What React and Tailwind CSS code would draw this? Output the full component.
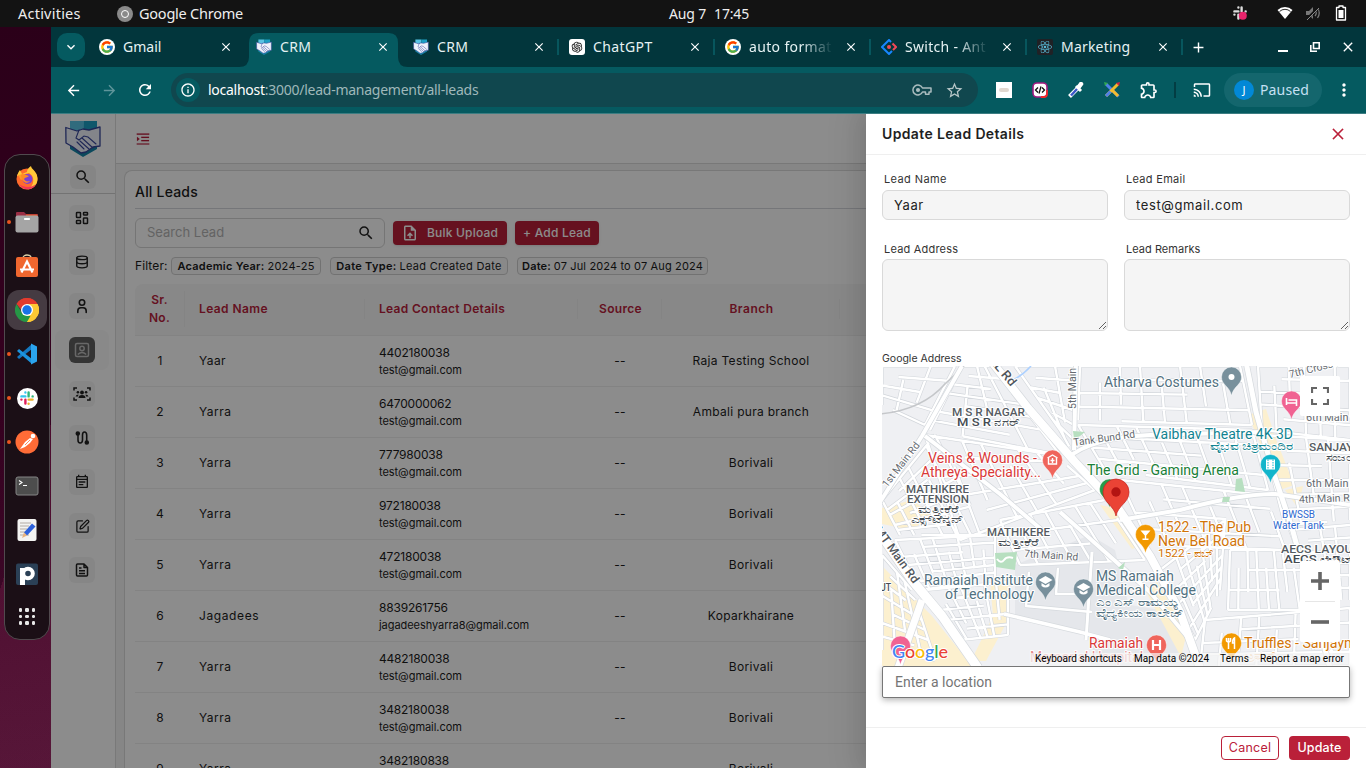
import React from "react";
import { FcGoogle } from "react-icons/fc";
import { FaReact } from "react-icons/fa";
import { AiOutlineOpenAI, AiOutlineMenuUnfold, AiOutlineClose } from "react-icons/ai";
import {
  MdOutlineEventNote, MdOutlineUploadFile, MdArrowBack, MdArrowForward, MdRefresh,
  MdInfoOutline, MdStarOutline, MdOutlineExtension, MdCast, MdMoreVert,
  MdClose, MdAdd, MdExpandMore, MdSearch,
} from "react-icons/md";
import { Database, SquarePen } from "lucide-react";

function Handshake({ className }) {
  return (
    <svg className={className} viewBox="0 0 36 37">
      <path d="M5 1h14v32L5 25z" fill="#59c3e3" />
      <path d="M19 1h13v24L18 33z" fill="#1c9fc4" />
      <path d="M5 24l13 6 14-6v5l-14 8-13-8z" fill="#1686a8" />
      <path d="M.8 7.5L12 11l6-2 6 1 11-3v19l-7 1-7 5-5 1-8-6-7-4z" fill="#eef2fb" stroke="#38479b" strokeWidth="1.3" strokeLinejoin="round" />
      <path d="M14 10l-3 8 3 2 5-4 4 1 8 7M17 18l11 10M15 21l9 8M12 22l7 7" fill="none" stroke="#38479b" strokeWidth="1.1" strokeLinecap="round" />
    </svg>
  );
}

function SlackMark({ className }) {
  return (
    <svg className={className} viewBox="0 0 20 20" fill="none" strokeWidth="3" strokeLinecap="round">
      <path d="M8 3v.1M3 8h5" stroke="#36c5f0" />
      <path d="M12 3v5M17 8h.1" stroke="#2eb67d" />
      <path d="M17 12h-5M12 17v.1" stroke="#ecb22e" />
      <path d="M8 17v-5M3 12h.1" stroke="#e01e5a" />
    </svg>
  );
}

const dockIcons = {
  firefox: (
    <svg viewBox="0 0 24 24" className="size-6">
      <circle cx="12" cy="13" r="10.5" fill="#ff6b2c" />
      <path d="M2 10C3 7 4 5 5 4l2 4 5-2c0-2 1-4 4-6 0 3 6 5 6.500 12 .5 6-4 11-10 11.500C20 20 20 10 14 7z" fill="#ffc83a" />
      <path d="M3 9l5-1 4 2-3 2-3 2z" fill="#ff9a28" />
      <path d="M4 18c4 7 14 7 17 0-4 4-12 4-17 0z" fill="#f1375a" />
      <circle cx="12.500" cy="13" r="5" fill="#7b40d6" />
      <path d="M6 9c3-1 5 0 8 1-2 2-4 1-5 3 1 2 3 3 6 2-3 4-9 1-9-6z" fill="#ff8a24" />
    </svg>
  ),
  files: (
    <svg viewBox="0 0 24 24" className="size-6">
      <path d="M1 3q0-1 1-1h7l2 2h11q1 0 1 1v5H1z" fill="#9b2e45" /><path d="M11 4.500h11.500V7H11z" fill="#e95420" />
      <rect x=".5" y="5.500" width="23" height="17" rx="2" fill="#a5a5a5" />
      <rect x="9" y="8" width="6" height="2" rx=".8" fill="#fff" />
    </svg>
  ),
  store: (
    <svg viewBox="0 0 24 24" className="size-6">
      <path d="M8 4c0-4 8-4 8 0" fill="none" stroke="#d9cfa8" strokeWidth="1.300" />
      <rect x="1" y="3" width="22" height="20" rx="2" fill="#f0672f" />
      <path d="M6.500 18.500L12 7.500l5.500 11M5 15.500h14" fill="none" stroke="#fff" strokeWidth="2.200" />
    </svg>
  ),
  chrome: (
    <svg viewBox="0 0 24 24" className="size-6">
      <path d="M12 12L1.600 6A12 12 0 0 1 22.400 6z" fill="#e33b2e" />
      <path d="M12 12L22.400 6A12 12 0 0 1 12 24z" fill="#fcc934" />
      <path d="M12 6h10.400L17.200 15 12 24l0-6 5-6z" fill="#fcc934" />
      <path d="M1.600 6A12 12 0 0 1 22.400 6H12c-3 0-5 2-6 5.500z" fill="#e33b2e" />
      <path d="M1.600 6L6.800 15l5.200 3h5l-5 6A12 12 0 0 1 1.600 6z" fill="#269746" />
      <path d="M17.200 15L12 24A12 12 0 0 0 22.400 6H12z" fill="#fcc934" />
      <circle cx="12" cy="12" r="6" fill="#fff" /><circle cx="12" cy="12" r="4.700" fill="#1a73e8" />
    </svg>
  ),
  code: (
    <svg viewBox="0 0 24 24" className="size-6">
      <path d="M17 2L2 15l2 2L17 7z" fill="#1478c0" /><path d="M17 22L2 9l2-2 13 10z" fill="#1c93dd" />
      <path d="M16 1.500l6 3v15l-6 3z" fill="#2ba4ee" />
    </svg>
  ),
  slack: (
    <span className="flex size-[21px] items-center justify-center rounded-full bg-white"><SlackMark className="size-4" /></span>
  ),
  postman: (
    <svg viewBox="0 0 24 24" className="size-6">
      <circle cx="12" cy="12" r="11.500" fill="#ff6c37" />
      <path d="M5 19l5-7 5-4 3 1-3 4-5 4z" fill="#fff" /><circle cx="18" cy="6" r="2.300" fill="#fff" />
      <path d="M10 15l5-5" stroke="#ff6c37" strokeWidth=".8" />
    </svg>
  ),
  terminal: (
    <svg viewBox="0 0 24 24" className="size-6">
      <rect x="1" y="3" width="22" height="18" rx="2" fill="#4d4d4d" stroke="#858585" />
      <path d="M4 6.500l3 2-3 2M8 11.500h4" fill="none" stroke="#fff" strokeWidth="1.100" />
    </svg>
  ),
  editor: (
    <svg viewBox="0 0 24 24" className="size-6">
      <rect x="2.500" y="1" width="19" height="22" rx="2" fill="#f3f3f1" />
      <path d="M5 5h11M5 8h9M5 11h7M5 14h6M5 17h9" stroke="#b2aba4" />
      <path d="M9 14.500l8-9 3.500 3-8.500 9z" fill="#2d62db" /><path d="M9 14.500l3 3-5 2.500z" fill="#e9b27c" />
    </svg>
  ),
  pp: (
    <svg viewBox="0 0 24 24" className="size-6">
      <rect x="1" y="1.500" width="22" height="21.500" rx="2" fill="#2b4056" />
      <circle cx="13" cy="11.500" r="4.800" fill="none" stroke="#fff" strokeWidth="4" />
      <path d="M5 6h5v17H5z" fill="#fff" />
    </svg>
  ),
};

const dock = [
  ["firefox", false], ["files", true], ["store", false], ["chrome", true], ["code", true],
  ["slack", true], ["postman", true], ["terminal", false], ["editor", false], ["pp", false],
];

function Dock() {
  return (
    <aside className="flex w-[51px] shrink-0 flex-col bg-[linear-gradient(170deg,#2b0019_0%,#34001f_50%,#420e2d_100%)]">
      <div className="flex h-full flex-col bg-[linear-gradient(107deg,transparent_0_62%,rgba(255,90,150,.11)_62%_100%)] pt-[127px] pl-1">
        <div className="flex h-[486px] w-[46px] flex-col items-center rounded-[16px] border border-[#514a4e] bg-[#1b0f16] pt-px">
          {dock.map(([id, on]) => (
            <div key={id} className="flex h-11 w-full items-center">
              <span className={on ? "ml-0.5 size-1 rounded-full bg-[#e95420]" : "ml-0.5 size-1"} />
              <span className={id === "chrome" ? "-ml-1 flex size-10 items-center justify-center rounded-xl bg-[#453b42]" : "-ml-1 flex size-10 items-center justify-center"}>{dockIcons[id]}</span>
            </div>
          ))}
          <div className="mt-3 grid grid-cols-3 gap-[3px]">
            {Array.from({ length: 9 }, (_, i) => <span key={i} className="size-[3.500px] rounded-[1.200px] bg-[#e8e8e8]" />)}
          </div>
        </div>
      </div>
    </aside>
  );
}

function TopBar() {
  return (
    <header className="grid h-[27px] shrink-0 grid-cols-[591px_200px_1fr] items-center bg-[#131313] pl-[18px] text-[14.500px] text-[#eee]">
      <div className="flex items-center">
        <span className="w-[99px] tracking-[0.230px]">Activities</span>
        <span className="flex size-4 items-center justify-center rounded-full bg-[#8a8a8a]"><span className="size-[8px] rounded-full border-[1.500px] border-white" /></span>
        <span className="pl-[6px] tracking-[-0.240px] whitespace-nowrap">Google Chrome</span>
      </div>
      <div className="flex justify-center gap-2 pb-px text-[14px] tracking-[-0.150px]"><span>Aug 7</span><span>17:45</span></div>
      <div className="flex items-center justify-end pr-[19px] pb-px">
        <svg viewBox="0 0 20 20" className="mr-[29px] size-4" strokeWidth="3" strokeLinecap="round"><path d="M8 3v.1M3 8h5M12 3v5M17 8h.1M3 12h.1M8 12v5" fill="none" stroke="#ddd" /><circle cx="13.500" cy="13.500" r="5" fill="#e8246c" /></svg>
        <svg viewBox="0 0 16 14" className="mr-[12px] h-3.5 w-4"><path d="M.5 4a11 11 0 0 1 15 0L8 13z" fill="#fff" /><path d="M2.500 5.500a8 8 0 0 1 11 0" stroke="#131313" strokeWidth=".9" fill="none" /></svg>
        <svg viewBox="0 0 16 16" className="mr-[14px] size-4"><path d="M1 6h3l4-4v12L4 10H1z" fill="#777" /><path d="M10 5q2.500 3 0 6M12.500 3q3.500 5 0 10" fill="none" stroke="#777" strokeWidth="1.300" /><path d="M2 14L14 2" stroke="#131313" strokeWidth="2.500" /><path d="M2 15L14 3" stroke="#888" /></svg>
        <svg viewBox="0 0 12 16" className="h-4 w-3"><path d="M4 1h4v1.500h2.500v12.500h-9V2.500H4z" fill="none" stroke="#fff" strokeWidth="1.300" strokeLinejoin="round" /><path d="M3.500 5h5v8h-5z" fill="#fff" /></svg>
      </div>
    </header>
  );
}

function AntMark() {
  return (
    <svg viewBox="0 0 16 16" className="size-4">
      <path d="M10 3L8 1 1 8l7 7 3-3" fill="none" stroke="#1786ff" strokeWidth="2" /><path d="M11.500 4.500L15 8l-3 3" fill="none" stroke="#f04858" strokeWidth="2" />
      <circle cx="8" cy="8" r="2" fill="#f04858" />
    </svg>
  );
}

const google = <span className="flex size-4 items-center justify-center rounded-full bg-white"><FcGoogle className="size-3.5" /></span>;
const tabs = [
  { t: "Gmail", icon: google, w: "w-[157px]" },
  { t: "CRM", icon: <Handshake className="size-4" />, w: "w-[157px]", active: true, tr: "tracking-[0.300px]" },
  { t: "CRM", icon: <Handshake className="size-4" />, w: "w-[156px]", tr: "tracking-[0.300px]" },
  { t: "ChatGPT", icon: <span className="flex size-4 items-center justify-center rounded-[3px] bg-white"><AiOutlineOpenAI className="size-3.5 text-[#222]" /></span>, w: "w-[156px]", tr: "tracking-[0.400px]" },
  { t: "auto format", icon: google, w: "w-[156px]", fade: true, tr: "tracking-[0.350px]" },
  { t: "Switch - Ant", icon: <AntMark />, w: "w-[156px]", fade: true, tr: "tracking-[0.300px]" },
  { t: "Marketing", icon: <span className="flex size-4 items-center justify-center rounded-[2px] bg-[#202125]"><FaReact className="size-3.5 text-[#58b9d6]" /></span>, w: "w-[156px]", tr: "tracking-[0.200px]" },
];

function Tabs() {
  return (
    <div className="flex h-10 shrink-0 items-stretch bg-[#02363c] text-[14px] text-[#e6f2f3]">
      <div className="flex w-[40px] items-center pl-1.5"><span className="flex size-7 items-center justify-center rounded-[10px] bg-[#055a60]"><MdExpandMore className="size-4 text-white" /></span></div>
      {tabs.map((b, i) => (
        <div key={i} className={`relative flex ${b.w} shrink-0 items-end`}>
          {b.active && (
            <svg viewBox="0 0 170 34" className="absolute bottom-0 -left-[9px] h-[34px] w-[170px]"><path d="M0 34q10 0 10-10V10Q10 0 20 0h130q9 0 9 10v14q0 10 10 10z" fill="#055a60" /></svg>
          )}
          <div className="relative flex h-10 w-full items-center pl-2">
            {b.icon}
            <span className={`ml-2 w-[84px] overflow-hidden pb-0.5 whitespace-nowrap ${b.tr || ""} ${b.fade ? "[mask-image:linear-gradient(90deg,#000_62%,transparent)]" : ""}`}>{b.t}</span>
            <MdClose className={i > 1 ? "ml-[11px] size-3.5 shrink-0 text-white" : "ml-[12px] size-3.5 shrink-0 text-white"} />
            {i > 1 && <span className="ml-auto mr-0.5 h-4 w-0.5 bg-[#07565d]" />}
          </div>
        </div>
      ))}
      <div className="flex flex-1 items-center text-white">
        <MdAdd className="ml-[5px] size-[17px]" />
        <span className="mt-[8px] ml-[71px] h-0.5 w-2.5 bg-white" />
        <svg viewBox="0 0 10 10" className="ml-[22px] size-2.5"><path d="M3.500.8h5.700v5.700H3.500zM.8 3v6.200H7" fill="none" stroke="#fff" strokeWidth="1.600" /></svg>
        <MdClose className="ml-[20px] size-4" />
      </div>
    </div>
  );
}

function Toolbar() {
  return (
    <div className="flex h-[46px] shrink-0 items-center bg-[#055a60] text-white">
      <MdArrowBack className="ml-[14px] size-[17px]" />
      <MdArrowForward className="ml-[19px] size-[17px] text-[#5f959a]" />
      <MdRefresh className="ml-[18px] size-[18px]" />
      <div className="ml-[17px] flex h-[34px] w-[807px] items-center rounded-full bg-[#10474e] px-[5px]">
        <span className="flex size-6 items-center justify-center rounded-full bg-[#055a60]"><MdInfoOutline className="size-4" /></span>
        <span className="ml-2 pb-0.5 text-[14px] tracking-[-0.260px] text-[#9fb8ba]"><span className="text-white">localhost</span>:3000/lead-management/all-leads</span>
        <svg viewBox="0 0 20 12" className="ml-auto h-3 w-5" fill="none" stroke="#a9bcbe" strokeWidth="1.500"><path d="M10.500 4H19v4h-2v2.200h-3.500V8h-3A5 5 0 1 1 10.500 4z" strokeLinejoin="round" /><circle cx="6" cy="6" r="1.300" fill="#a9bcbe" /></svg>
        <MdStarOutline className="mr-[9px] ml-[13px] size-[19px] text-[#b6c6c7]" />
      </div>
      <span className="ml-[18px] flex size-4 items-center justify-center bg-white"><span className="h-1 w-2.5 rounded bg-[#e2d8d0]" /></span>
      <svg viewBox="0 0 16 16" className="ml-5 size-4"><rect x="1" y="1" width="14" height="14" rx="4" fill="#fff" stroke="#a01a80" strokeWidth="1.600" /><path d="M9 15h3q3 0 3-3V8" stroke="#f02a2a" strokeWidth="1.800" fill="none" /><path d="M6 5.500L3.500 8 6 10.500M10 5.500L12.500 8 10 10.500M9 4.500l-2 7" stroke="#111" fill="none" strokeWidth="1.300" /></svg>
      <svg viewBox="0 0 16 16" className="ml-5 size-4"><path d="M8 4l5 5" stroke="#fff" strokeWidth="3" /><path d="M10 6l3-4" stroke="#fff" strokeWidth="4.500" strokeLinecap="round" /><path d="M9.500 6.500L3 13l-1.500 1.500" stroke="#fff" strokeWidth="4" /><path d="M9 7l-6 6.500" stroke="#3956c8" strokeWidth="2.500" /></svg>
      <svg viewBox="0 0 16 16" className="ml-5 size-4"><path d="M2 2l12.500 12.500" stroke="#4f80e8" strokeWidth="3" /><path d="M8 8l6 6" stroke="#f3bb2e" strokeWidth="3" /><path d="M14 2L2 14" stroke="#f3bb2e" strokeWidth="3" /><path d="M6.500 9.500L2 14" stroke="#4f80e8" strokeWidth="3" /><path d="M0 0l4 1-3 3z" fill="#32a852" /><path d="M16 0l-4 1 3 3z" fill="#d6233f" /></svg>
      <MdOutlineExtension className="ml-[19px] size-[20px]" />
      <span className="ml-[15px] h-4 w-0.5 bg-[#033d43]" />
      <MdCast className="ml-[17px] size-[18px]" />
      <div className="ml-[13px] flex h-[34px] w-[98px] items-center rounded-full bg-[#14666d] pl-2.5">
        <span className="flex size-5 items-center justify-center rounded-full bg-[#0288d6] text-[11px]">J</span>
        <span className="ml-1.5 pb-0.5 text-[14px] tracking-[0.150px] text-[#c6e0f4]">Paused</span>
      </div>
      <MdMoreVert className="ml-3 size-5" />
    </div>
  );
}

const sideIcons = [
  <svg key="d" viewBox="0 0 16 16" className="size-4" fill="none" stroke="currentColor" strokeWidth="1.500"><rect x="2.500" y="2.500" width="4" height="5" rx=".6" /><rect x="9.500" y="2.500" width="4" height="2.500" rx=".6" /><rect x="2.500" y="10.500" width="4" height="3" rx=".6" /><rect x="9.500" y="8" width="4" height="5.500" rx=".6" /></svg>,
  <Database key="b" className="size-[14px]" strokeWidth={2.4} />,
  <svg key="p" viewBox="0 0 16 16" className="size-4" fill="none" stroke="currentColor" strokeWidth="1.600" strokeLinecap="round"><circle cx="8" cy="4.500" r="2.700" /><path d="M3.800 14.500V13q0-3.300 3-3.300h2.400q3 0 3 3.300v1.500" /></svg>,
  <svg key="c" viewBox="0 0 16 16" className="size-4" fill="none" stroke="#bdbdbd" strokeWidth="1.500"><rect x="1.500" y="1.500" width="13" height="13" rx="1.500" /><circle cx="8" cy="6.500" r="2.200" /><path d="M3.800 12.500q4.200-4 8.400 0" /></svg>,
  <svg key="s" viewBox="0 0 18 16" className="h-4 w-[18px]" fill="currentColor"><path d="M1 4.500V2h3M14 2h3v2.500M1 11.500V14h3M14 14h3v-2.500" fill="none" stroke="currentColor" strokeWidth="1.500" /><circle cx="9" cy="6.500" r="1.900" /><circle cx="4.900" cy="6.300" r="1.300" /><circle cx="13.100" cy="6.300" r="1.300" /><path d="M5.500 12q0-3 3.500-3t3.500 3zM2.500 10.500q.5-2 3-2L5 10.500zM15.500 10.500q-.5-2-3-2l.5 2z" /></svg>,
  <svg key="r" viewBox="0 0 16 16" className="size-4" fill="none" stroke="currentColor" strokeWidth="1.600"><path d="M4 3v7q0 3 2.200 3t2.300-3V5q0-3 2-3t2.200 3v7" /><circle cx="3.800" cy="3.500" r="1.500" fill="currentColor" /><circle cx="12.800" cy="12.500" r="1.500" fill="currentColor" /></svg>,
  <MdOutlineEventNote key="e" className="size-4" />,
  <SquarePen key="q" className="size-[15px]" strokeWidth={2} />,
  <svg key="f" viewBox="0 0 16 16" className="size-4" fill="none" stroke="currentColor" strokeWidth="1.500" strokeLinejoin="round"><path d="M3.500 2H10l3.500 3.500V13q0 1-1 1h-9q-1 0-1-1V3q0-1 1-1zM10 2v3.500h3.500M5 6h2.500M5 8.800h6M5 11.400h6" /></svg>,
];

function Sidebar() {
  return (
    <nav className="flex w-[65px] shrink-0 flex-col items-center border-r border-[#dcdcdc] text-[#222]">
      <Handshake className="mt-[6px] h-[37px] w-9" />
      <span className="mt-2 flex h-6 w-[26px] items-center justify-center rounded-md bg-[#f3f3f3]"><MdSearch className="size-[18px]" /></span>
      <span className="mt-1 h-px w-full bg-[#d2d2d2]" />
      <div className="mt-0.5 mr-0.5 flex flex-col">
        {sideIcons.map((ic, i) => (
          <span key={i} className="flex h-11 w-[54px] items-center justify-center">
            <span className={i === 3 ? "flex h-10 w-[54px] items-center justify-center rounded-lg bg-[#f9f9f9]" : "flex"}>
              <span className={i === 3 ? "flex size-[26px] items-center justify-center rounded-md bg-[#606060]" : "flex size-[26px] items-center justify-center rounded-md bg-[#f5f5f5]"}>{ic}</span>
            </span>
          </span>
        ))}
      </div>
    </nav>
  );
}

const leads = [
  ["Yaar", "4402180038", "test@gmail.com", "Raja Testing School"],
  ["Yarra", "6470000062", "test@gmail.com", "Ambali pura branch"],
  ["Yarra", "777980038", "test@gmail.com", "Borivali"],
  ["Yarra", "972180038", "test@gmail.com", "Borivali"],
  ["Yarra", "472180038", "test@gmail.com", "Borivali"],
  ["Jagadees", "8839261756", "jagadeeshyarra8@gmail.com", "Koparkhairane"],
  ["Yarra", "4482180038", "test@gmail.com", "Borivali"],
  ["Yarra", "3482180038", "test@gmail.com", "Borivali"],
  ["Yarra", "3482180838", "test@gmail.com", "Borivali"],
];

function Tag({ k, v, w }) {
  return <span className={`flex h-[18px] items-center justify-center rounded border border-[#d0d0d0] bg-[#fafafa] text-[11px] whitespace-nowrap ${w}`}><b className="mr-[3px] font-semibold">{k}</b>{v}</span>;
}

const cols = "grid grid-cols-[50px_180px_213px_84px_178px_300px]";

function Leads() {
  return (
    <div className="flex min-w-0 flex-1 flex-col bg-[#f4f4f4] text-[#1c1c1c]">
      <div className="flex h-[50px] shrink-0 items-center border-b border-[#dadada] bg-white pl-[19px]"><AiOutlineMenuUnfold className="size-4 text-[#b91f3c] [stroke:currentColor] [stroke-width:10]" /></div>
      <section className="mt-1.5 ml-2 w-[1300px] flex-1 rounded-tl-lg border-t border-l border-[#dadada] bg-white pl-2.5">
        <h1 className="flex h-[38px] items-center border-b border-[#d5d8dc] pt-1 text-[14px] font-medium tracking-[0.200px]">All Leads</h1>
        <div className="mt-[9px] flex h-[30px] items-center">
          <div className="flex h-[30px] w-[250px] items-center justify-between rounded-md border border-[#d5d5d5] px-[11px] text-[13px] text-[#b5b5b5]">Search Lead<MdSearch className="-mr-0.5 size-[18px] text-[#222]" /></div>
          <button className="ml-2 flex h-6 w-[114px] items-center rounded bg-[#ba2039] pl-[8px] text-[12px] font-medium tracking-[0.200px] text-white shadow-sm"><MdOutlineUploadFile className="mr-2 size-[18px]" />Bulk Upload</button>
          <button className="ml-2 h-6 w-[84px] rounded bg-[#ba2039] text-[12px] font-medium tracking-[0.200px] text-white shadow-sm">+ Add Lead</button>
        </div>
        <div className="mt-[9px] flex h-[18px] items-center">
          <span className="w-9 text-[12px] tracking-[0.100px]">Filter:</span>
          <Tag w="w-[150px] tracking-[0.250px]" k="Academic Year:" v="2024-25" />
          <Tag w="ml-[9px] w-[178px] tracking-[0.290px]" k="Date Type:" v="Lead Created Date" />
          <Tag w="ml-[9px] w-[191px] tracking-[0.140px]" k="Date:" v="07 Jul 2024 to 07 Aug 2024" />
        </div>
        <div className={`mt-[9px] ${cols} h-[52px] items-center rounded-tl-lg border-b border-[#eeeeee] bg-[#f7f7f7] pb-0.5 text-[12px] font-semibold tracking-[0.300px] text-[#b91f3c]`}>
          <span className="border-r border-[#f0f0f0] text-center leading-[18px]">Sr.<br />No.</span>
          <span className="flex h-5 items-center border-r border-[#f0f0f0] pl-3.5 tracking-[0.400px]">Lead Name</span>
          <span className="flex h-5 items-center border-r border-[#f0f0f0] pl-3.5">Lead Contact Details</span>
          <span className="flex h-5 items-center justify-center border-r border-[#f0f0f0] pl-0.5">Source</span>
          <span className="flex h-5 items-center justify-center border-r border-[#f0f0f0] pl-0.5 tracking-[0.500px]">Branch</span>
        </div>
        {leads.map(([name, tel, mail, branch], i) => (
          <div key={i} className={`${cols} h-[51px] items-center border-b border-[#eeeeee] text-[12px]`}>
            <span className="text-center">{i + 1}</span>
            <span className={name === "Yaar" ? "pl-3.5 tracking-[0.450px]" : name === "Yarra" ? "pl-3.5 tracking-[0.500px]" : "pl-3.5 tracking-[0.600px]"}>{name}</span>
            <span className="flex flex-col pl-3.5 leading-[18px] tracking-[-0.200px]">{tel}<small className="text-[11px] leading-[17px] tracking-[-0.050px]">{mail}</small></span>
            <span className="text-center tracking-[0.300px]">--</span>
            <span className="text-center tracking-[0.300px]">{branch}</span>
          </div>
        ))}
      </section>
    </div>
  );
}

/* Streets: each quad is subdivided into parallel lanes in both directions. */
const quads = [
  [[882, 366], [955, 366], [925, 425], [882, 405], 3, 4],
  [[962, 366], [992, 366], [1060, 455], [930, 430], 4, 7],
  [[925, 435], [1055, 455], [1095, 490], [960, 540], 7, 5],
  [[882, 500], [935, 435], [985, 535], [900, 535], 6, 7],
  [[1015, 366], [1075, 366], [1074, 455], [1060, 430], 3, 6],
  [[1080, 366], [1240, 366], [1252, 425], [1078, 420], 8, 4],
  [[1078, 425], [1252, 430], [1268, 490], [1105, 470], 9, 4],
  [[1258, 366], [1350, 366], [1350, 440], [1262, 430], 6, 5],
  [[1262, 435], [1350, 440], [1350, 520], [1285, 525], 4, 6],
  [[1120, 480], [1265, 495], [1285, 550], [1150, 545], 7, 4],
  [[895, 540], [995, 535], [995, 580], [920, 590], 8, 6],
  [[925, 590], [1008, 582], [1008, 635], [960, 640], 7, 5],
  [[882, 555], [912, 590], [935, 660], [882, 650], 4, 7],
  [[1000, 520], [1105, 500], [1145, 560], [1020, 565], 7, 3],
  [[1160, 570], [1225, 520], [1220, 590], [1195, 640], 8, 6],
  [[1230, 550], [1300, 550], [1310, 610], [1228, 610], 8, 3],
  [[1205, 620], [1350, 608], [1350, 666], [1200, 666], 8, 4],
  [[1290, 530], [1350, 525], [1350, 600], [1315, 600], 4, 6],
];
const mix = (a, b, t) => [a[0] + (b[0] - a[0]) * t, a[1] + (b[1] - a[1]) * t];
const seg = (a, b) => `M${a[0].toFixed(1)} ${a[1].toFixed(1)}L${b[0].toFixed(1)} ${b[1].toFixed(1)}`;
const streets = quads.map(([a, b, c, d, n, m]) => {
  let out = "";
  for (let i = 0; i <= n; i++) {
    const cut = i % 3 === 1 ? 0.3 : 0;
    const top = mix(a, b, i / n), bot = mix(d, c, i / n);
    out += seg(mix(top, bot, cut), mix(top, bot, i % 4 === 2 ? 0.7 : 1));
  }
  for (let j = 0; j <= m; j++) {
    const l = mix(a, d, j / m), r = mix(b, c, j / m);
    out += seg(mix(l, r, j % 3 === 1 ? 0.25 : 0), mix(l, r, j % 4 === 2 ? 0.65 : 1));
  }
  return out;
}).join("");

const bigRoads = [
  ["M992 362L1028 408L1075 462L1118 508L1150 556L1180 612L1200 668", 8],
  ["M880 533L912 580L942 616L978 668", 9],
  ["M922 600L898 668", 7],
  ["M880 502L922 436L962 366", 4],
  ["M1246 362L1256 412L1272 468L1292 528L1312 600L1330 668", 5],
  ["M925 436L1000 494L1042 530", 4],
  ["M1076 362L1074 450", 4],
  ["M1068 458Q1090 438 1150 435L1262 432", 4],
  ["M1120 520L1180 510Q1240 494 1275 494L1350 505", 4],
  ["M1004 614L1080 632L1110 640", 3.5],
  ["M1029 572L1026 606L1092 612M1058 568l-2 26h36M1046 572l6 12", 2.5],
  ["M1092 552L1086 640", 3],
  ["M1060 512L1150 592L1190 640", 4],
];

const pins = [
  [1231.5, 377, "#78909c", "dot"], [1291.5, 401, "#f06292", "bed"], [1052.5, 460, "#ef655c", "med"],
  [1270.5, 464.5, "#12b5cb", "film"], [1045.5, 582, "#78909c", "cap"], [1083.5, 589, "#78909c", "cap"],
  [1145.5, 534.5, "#f29900", "cup"], [1156.5, 645, "#ef655c", "h"], [1231.5, 643, "#f29900", "fork"],
  [900.5, 646, "#f06292", "none"], [1109.5, 489, "#279a4b", "none"],
];
const glyphs = {
  none: null,
  dot: <circle r="3" fill="#fff" />,
  bed: <path d="M-5-3v7M-5 2H5v3M-3-1H5v3" fill="none" stroke="#fff" strokeWidth="1.600" />,
  med: <path d="M-5-2l5-3 5 3M-4-2v6h8v-6M0-2v5M-2 .5h4" fill="none" stroke="#fff" strokeWidth="1.400" />,
  film: <><path d="M-4.500-5h9V5h-9z" fill="#fff" /><path d="M-2.500-5V5M2.500-5V5" stroke="#12b5cb" strokeWidth="1" strokeDasharray="1.500 1" /></>,
  cap: <path d="M-7-2l7-4 7 4-7 4zM-4 1v3q4 3 8 0V1L0 3.500z" fill="#fff" />,
  cup: <path d="M-5-4H5L.7 1v3H3v1.500h-6V4h2.300V1z" fill="#fff" />,
  h: <path d="M-3.500-5V5M3.500-5V5M-3.500 0h7" stroke="#fff" strokeWidth="2.200" />,
  fork: <path d="M-3-5V6M-5-5v3q2 2 4 0v-3M3 6V-5q-2 1-2 5h2" fill="none" stroke="#fff" strokeWidth="1.500" />,
};

/* text, x, y, rendered length, size, colour, weight, rotation */
const labels = [
  ["Atharva Costumes", 1104, 387, 115, 14, "#527181", 400],
  ["M S R NAGAR", 952, 415.5, 73, 10.5, "#555b62", 500],
  ["M S R ನಗರ್", 957, 425.5, 62, 10, "#444b52", 500],
  ["Vaibhav Theatre 4K 3D", 1152, 439, 141, 14, "#118391", 400],
  ["ವೈಭವ ಚಿತ್ರಮಂದಿರ", 1210, 450, 83, 11, "#118391", 400],
  ["Veins & Wounds -", 928, 463, 109, 14, "#d93838", 400],
  ["Athreya Speciality...", 921, 477, 120, 14, "#d93838", 400],
  ["MATHIKERE", 906, 492.500, 63, 10, "#555b62", 500],
  ["EXTENSION", 907, 502.500, 62, 10, "#555b62", 500],
  ["ಮತ್ತೀಕೆರೆ", 918, 512.5, 40, 9.5, "#444b52", 500],
  ["ಎಕ್ಸ್‌ಟೆನ್ಶನ್", 911, 523, 53, 9.5, "#444b52", 500],
  ["The Grid - Gaming Arena", 1087, 475, 152, 14, "#188038", 400],
  ["SANJAYNAGAR", 1309, 451, 84, 10, "#555b62", 500],
  ["ಸಂಜಯ್", 1326, 461, 38, 9.5, "#444b52", 500],
  ["6th Main Rd", 1306, 421, 58, 10.5, "#656a70", 400],
  ["6th Main Rd", 1306, 486.500, 58, 10.5, "#656a70", 400],
  ["4th Main Rd", 1299, 503, 57, 10.5, "#656a70", 400, -2],
  ["BWSSB", 1282, 518, 33, 10, "#2d68cf", 400],
  ["Water Tank", 1273, 529, 51, 10, "#2d68cf", 400],
  ["AECS LAYOUT", 1281, 553, 79, 10, "#555b62", 500],
  ["AECS ಲೇಔಟ್", 1284, 563, 70, 10, "#444b52", 500],
  ["MATHIKERE", 987, 535.500, 63, 10, "#555b62", 500],
  ["ಮತ್ತೀಕೆರೆ", 998, 545.500, 40, 9.5, "#444b52", 500],
  ["Ramaiah Institute", 924, 585, 109, 14, "#527181", 400],
  ["of Technology", 945, 599, 89, 14, "#527181", 400],
  ["MS Ramaiah", 1096, 581, 78, 14, "#527181", 400],
  ["Medical College", 1096, 595, 100, 14, "#527181", 400],
  ["ಎಂ ಎಸ್ ರಾಮಯ್ಯ", 1096, 606, 84, 10.5, "#527181", 400],
  ["ವೈದ್ಯಕೀಯ ಕಾಲೇಜ್", 1096, 617, 88, 10.5, "#527181", 400],
  ["1522 - The Pub", 1158, 532, 93, 14, "#d17408", 400],
  ["New Bel Road", 1158, 546, 87, 14, "#d17408", 400],
  ["1522 - ಪಬ್", 1158, 557, 56, 11, "#d17408", 400],
  ["Ramaiah", 1089, 648, 54, 14, "#d93838", 400],
  ["Memorial Hospital", 1030, 662, 113, 14, "#e88c8c", 400],
  ["ಟ್ರಫಲ್ಸ್", 1245, 659, 30, 10, "#efc391", 400],
  ["Truffles - Sanjaynagar", 1244, 648, 136, 14, "#d17408", 400],
  ["5th Main Rd", 1076, 409, 56, 10.5, "#656a70", 400, -90],
  ["EL Rd", 989, 361, 34, 12.5, "#50565c", 500, 50],
  ["Tank Bund Rd", 1074, 446, 62, 10.5, "#656a70", 400, -8],
  ["1st Main Rd", 887, 488, 54, 10.5, "#656a70", 400, -52],
  ["7th Main Rd", 1024, 557, 54, 10.5, "#656a70", 400, 4],
  ["MT Main Rd", 874, 530, 67, 12, "#50565c", 500, 54],
  ["7th Cross Rd", 1290, 378, 60, 10.5, "#656a70", 400, -14],
  ["UT", 880, 591, 11, 10, "#444b52", 500],
];

function MapView() {
  return (
    <div className="relative h-[300px] w-[468px] overflow-hidden">
      <svg viewBox="882 366 468 300" className="block h-[300px] w-[468px]" fontFamily='Roboto, "Noto Sans", sans-serif'>
        <path d="M882 366h468v300H882z" fill="#eff0f3" />
        <path d="M1015 565l75-30 25 15 15 60-15 30-100-25zM1100 600l60 10 30 56h-100z" fill="#e5e7eb" />
        <path d="M882 566l50 50 40 50h-90zM882 508l30-8 20 15-20 15-30-6zM990 580l18-4 2 40-24 45h-15l22-45zM1248 415l18-6 10 30 18 46-14 5zM1100 505l15 3 26 38-9 3zM1145 590l12-8 30 50-6 25zM1285 490l18-4-5 22z" fill="#fcf0cf" />
        <g fill="none">
          <path d={streets} stroke="#d2d6db" strokeWidth="3.600" />
          <path d={streets} stroke="#fff" strokeWidth="2.400" />
          <path d="M880 414Q922 410 945 384L964 366" stroke="#c5c7ca" strokeWidth="1.600" />
          {bigRoads.map(([d, w]) => <path key={d} d={d} stroke="#d6dade" strokeWidth={w + 1.4} strokeLinejoin="round" />)}
          {bigRoads.map(([d, w]) => <path key={d} d={d} stroke="#fff" strokeWidth={w} strokeLinejoin="round" />)}
          <path d="M1013 380q10-5 18-14" stroke="#acd0ff" strokeWidth="1.500" />
        </g>
        <path d="M995 553l22-1-2 18-19-3zM1236 479l6-1 3 14-10-1zM1223 497l7 0-1 5-7 0zM1073 431l12 1-5 4-6 4zM1118 568l7-6-2 8z" fill="#b7dfc0" />
        <path d="M997 559q4 5 7 1t9-2" fill="none" stroke="#fff" strokeWidth="2" />
        {pins.map(([x, y, c, g]) => (
          <g key={`${x}-${y}`} transform={`translate(${x} ${y})`}>
            <path d="M0 18.500C-2 9-10 8-10 0A10 10 0 1 1 10 0C10 8 2 9 0 18.500z" fill={c} stroke="#fff" strokeWidth=".4" />
            {glyphs[g]}
          </g>
        ))}
        {labels.map(([t, x, y, len, size, c, wt, rot]) => (
          <text key={`${t}${x}${y}`} x={x} y={y} textLength={len} lengthAdjust="spacingAndGlyphs" fontSize={size} fill={c} fontWeight={wt} stroke="#fff" strokeWidth="2" strokeLinejoin="round" paintOrder="stroke" transform={rot ? `rotate(${rot} ${x} ${y})` : undefined}>{t}</text>
        ))}
        <path d="M1116 516C1114 505 1103 503 1103 492a13 13 0 0 1 26 0C1129 503 1118 505 1116 516z" fill="#ea4335" stroke="#c5221f" strokeWidth=".7" />
        <circle cx="1116" cy="492" r="4.700" fill="#b31412" />
        <path d="M1030 653h320v13h-320z" fill="#f5f5f5" fillOpacity=".7" />
        <text x="892" y="658" textLength="56" fontSize="18" fontWeight="500" fontFamily="Lato, sans-serif" stroke="#fff" strokeWidth="2" paintOrder="stroke"><tspan fill="#4285f4">G</tspan><tspan fill="#ea4335">o</tspan><tspan fill="#fbbc04">o</tspan><tspan fill="#4285f4">g</tspan><tspan fill="#34a853">l</tspan><tspan fill="#ea4335">e</tspan></text>
        <g fontSize="10" fill="#000">
          <text x="1035" y="662" textLength="87">Keyboard shortcuts</text><text x="1134" y="662" textLength="75">Map data ©2024</text>
          <text x="1220" y="662" textLength="29">Terms</text><text x="1260" y="662" textLength="84">Report a map error</text>
        </g>
      </svg>
      <div className="absolute top-2.5 right-2.5 flex size-10 items-center justify-center rounded-xs bg-white">
        <svg viewBox="0 0 18 18" className="size-[18px]"><path d="M1 6V1h5M12 1h5v5M17 12v5h-5M6 17H1v-5" fill="none" stroke="#666" strokeWidth="2.200" /></svg>
      </div>
      <div className="absolute right-2.5 bottom-6 flex h-[81px] w-10 flex-col items-center rounded-xs bg-white">
        <svg viewBox="0 0 18 18" className="my-[11px] size-[18px]"><path d="M9 0v18M0 9h18" stroke="#666" strokeWidth="3.600" /></svg>
        <span className="h-px w-[30px] bg-[#e6e6e6]" />
        <svg viewBox="0 0 18 18" className="mt-[11px] size-[18px]"><path d="M0 9h18" stroke="#666" strokeWidth="3.600" /></svg>
      </div>
    </div>
  );
}

function Field({ label, value, area, tr, vt }) {
  return (
    <label className="flex w-[226px] flex-col">
      <span className={`h-4 pl-0.5 text-[11px] leading-4 text-[#333] ${tr}`}>{label}</span>
      {area
        ? <textarea className="mt-0.5 h-[72px] w-full resize rounded-md border border-[#d9d9d9] bg-[#f5f5f5]" />
        : <input readOnly value={value} className={`mt-[3px] h-[30px] w-full rounded-md border border-[#d9d9d9] bg-[#f5f5f5] px-[11px] pb-px text-[13px] text-[#222] outline-none ${vt}`} />}
    </label>
  );
}

function Drawer() {
  return (
    <section className="absolute inset-y-0 right-0 flex w-[500px] flex-col bg-white shadow-[-6px_0_16px_0_rgba(0,0,0,.08),-9px_0_28px_8px_rgba(0,0,0,.05)]">
      <header className="flex h-[41px] items-center justify-between border-b border-[#efefef] px-4">
        <h2 className="pb-0.5 text-[14px] font-semibold tracking-[0.360px] text-[#1f1f1f]">Update Lead Details</h2>
        <AiOutlineClose className="mr-1 size-4 text-[#ba2039] [stroke:currentColor] [stroke-width:20]" />
      </header>
      <div className="flex flex-1 flex-col px-4 pt-4">
        <div className="flex justify-between"><Field label="Lead Name" value="Yaar" tr="tracking-[0.400px]" vt="tracking-[0.600px]" /><Field label="Lead Email" value="test@gmail.com" tr="tracking-[0.300px]" vt="tracking-[0.620px]" /></div>
        <div className="mt-[21px] flex justify-between"><Field label="Lead Address" area tr="tracking-[0.200px]" /><Field label="Lead Remarks" area tr="tracking-[0.030px]" /></div>
        <p className="mt-[19px] h-4 pt-px text-[10.500px] leading-4 text-[#333]">Google Address</p>
        <MapView />
        <input placeholder="Enter a location" className="h-8 w-full rounded-xs border border-[#777] bg-white px-3 font-[Roboto] text-[14px] shadow-[0_2px_6px_rgba(0,0,0,.3)] placeholder:text-[#757575]" />
      </div>
      <footer className="flex h-[41px] items-center justify-end gap-2.5 border-t border-[#efefef] px-4 text-[12.500px]">
        <button className="h-6 w-[58px] rounded border border-[#ba2039] tracking-[0.250px] text-[#ba2039]">Cancel</button>
        <button className="h-6 w-[61px] rounded bg-[#ba2039] font-medium tracking-[0.150px] text-white">Update</button>
      </footer>
    </section>
  );
}

export default function App() {
  return (
    <div className="flex h-[768px] w-[1366px] flex-col overflow-hidden font-['Noto_Sans',sans-serif]">
      <TopBar />
      <div className="flex min-h-0 flex-1">
        <Dock />
        <main className="flex min-w-0 flex-1 flex-col">
          <Tabs />
          <Toolbar />
          <div className="h-px shrink-0 bg-[#3c7d82]" />
          <div className="relative flex min-h-0 flex-1 overflow-hidden bg-white font-[Inter,sans-serif]">
            <Sidebar />
            <Leads />
            <div className="absolute inset-0 bg-black/45" />
            <Drawer />
          </div>
        </main>
      </div>
    </div>
  );
}
